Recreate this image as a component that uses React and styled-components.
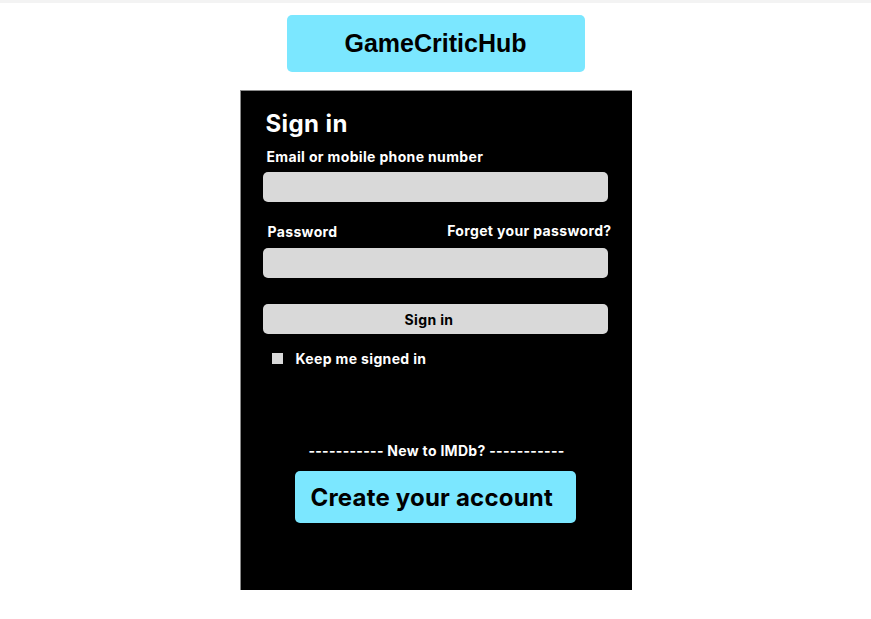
import React from "react";
import styled, { createGlobalStyle } from "styled-components";

const GlobalStyle = createGlobalStyle`
  body {
    margin: 0;
    background: #fff;
    font-family: "Inter", "Noto Sans", sans-serif;
  }
`;

const Page = styled.div`
  display: flex;
  flex-direction: column;
  align-items: center;
  min-height: 619px;
  border-top: 3px solid #f3f3f3;
`;

const Logo = styled.div`
  margin-top: 12px;
  width: 298px;
  height: 57px;
  border-radius: 5px;
  background: #7be7ff;
  display: flex;
  align-items: center;
  justify-content: center;
  font-family: "Liberation Sans", Arial, sans-serif;
  font-weight: 700;
  font-size: 25px;
  color: #000;
`;

const Panel = styled.div`
  margin-top: 18px;
  box-sizing: border-box;
  width: 392px;
  height: 500px;
  background: #000;
  border-top: 1px solid #8a8a8a;
  border-left: 1px solid #8a8a8a;
  padding: 18px 0 0 22px;
  display: flex;
  flex-direction: column;
  color: #fff;
`;

const Title = styled.h1`
  margin: 0 0 0 3px;
  font-size: 24px;
  line-height: 29px;
  font-weight: 700;
  letter-spacing: 0.4px;
`;

const Label = styled.label`
  display: block;
  font-size: 14px;
  line-height: 17px;
  font-weight: 700;
  letter-spacing: 0.35px;
  padding-left: ${(p) => p.$indent || 0}px;
  padding-top: ${(p) => p.$drop || 0}px;
`;

const FieldLabel = styled(Label)`
  margin: 10px 0 7px 4px;
`;

const LabelRow = styled.div`
  width: 349px;
  margin: 20px 0 8px;
  display: flex;
  justify-content: space-between;
  align-items: flex-start;
`;

const Input = styled.input`
  box-sizing: border-box;
  width: 345px;
  height: 30px;
  border: none;
  border-radius: 5px;
  background: #d9d9d9;
  outline: none;
`;

const SignInButton = styled.button`
  margin-top: 26px;
  box-sizing: border-box;
  width: 345px;
  height: 30px;
  padding: 0 12px 0 0;
  border: none;
  border-radius: 5px;
  background: #d9d9d9;
  font-family: "Inter", sans-serif;
  font-size: 14px;
  font-weight: 700;
  letter-spacing: 0.35px;
  color: #000;
`;

const KeepRow = styled.div`
  margin: 16px 0 0 9px;
  display: flex;
  align-items: center;
  gap: 13px;
`;

const Check = styled.span`
  width: 11px;
  height: 11px;
  background: #d9d9d9;
`;

const Divider = styled.div`
  margin-top: 75px;
  width: 348px;
  text-align: center;
  font-size: 14px;
  line-height: 17px;
  font-weight: 700;
  letter-spacing: 0.3px;
  white-space: pre;
`;

const CreateButton = styled.button`
  margin: 12px 0 0 32px;
  box-sizing: border-box;
  width: 281px;
  height: 52px;
  border: none;
  border-radius: 5px;
  background: #7be7ff;
  padding: 0 0 0 16px;
  text-align: left;
  font-family: "Inter", sans-serif;
  font-size: 24px;
  font-weight: 700;
  letter-spacing: 0.2px;
  color: #000;
  white-space: nowrap;
`;

export default function App() {
  return (
    <>
      <GlobalStyle />
      <Page>
        <Logo>GameCriticHub</Logo>
        <Panel>
          <Title>Sign in</Title>
          <FieldLabel>Email or mobile phone number</FieldLabel>
          <Input type="text" />
          <LabelRow>
            <Label $indent={5} $drop={1}>Password</Label>
            <Label>Forget your password?</Label>
          </LabelRow>
          <Input type="password" />
          <SignInButton>Sign in</SignInButton>
          <KeepRow>
            <Check />
            <Label>Keep me signed in</Label>
          </KeepRow>
          <Divider>----------- New to IMDb? -----------</Divider>
          <CreateButton>Create your account</CreateButton>
        </Panel>
      </Page>
    </>
  );
}
